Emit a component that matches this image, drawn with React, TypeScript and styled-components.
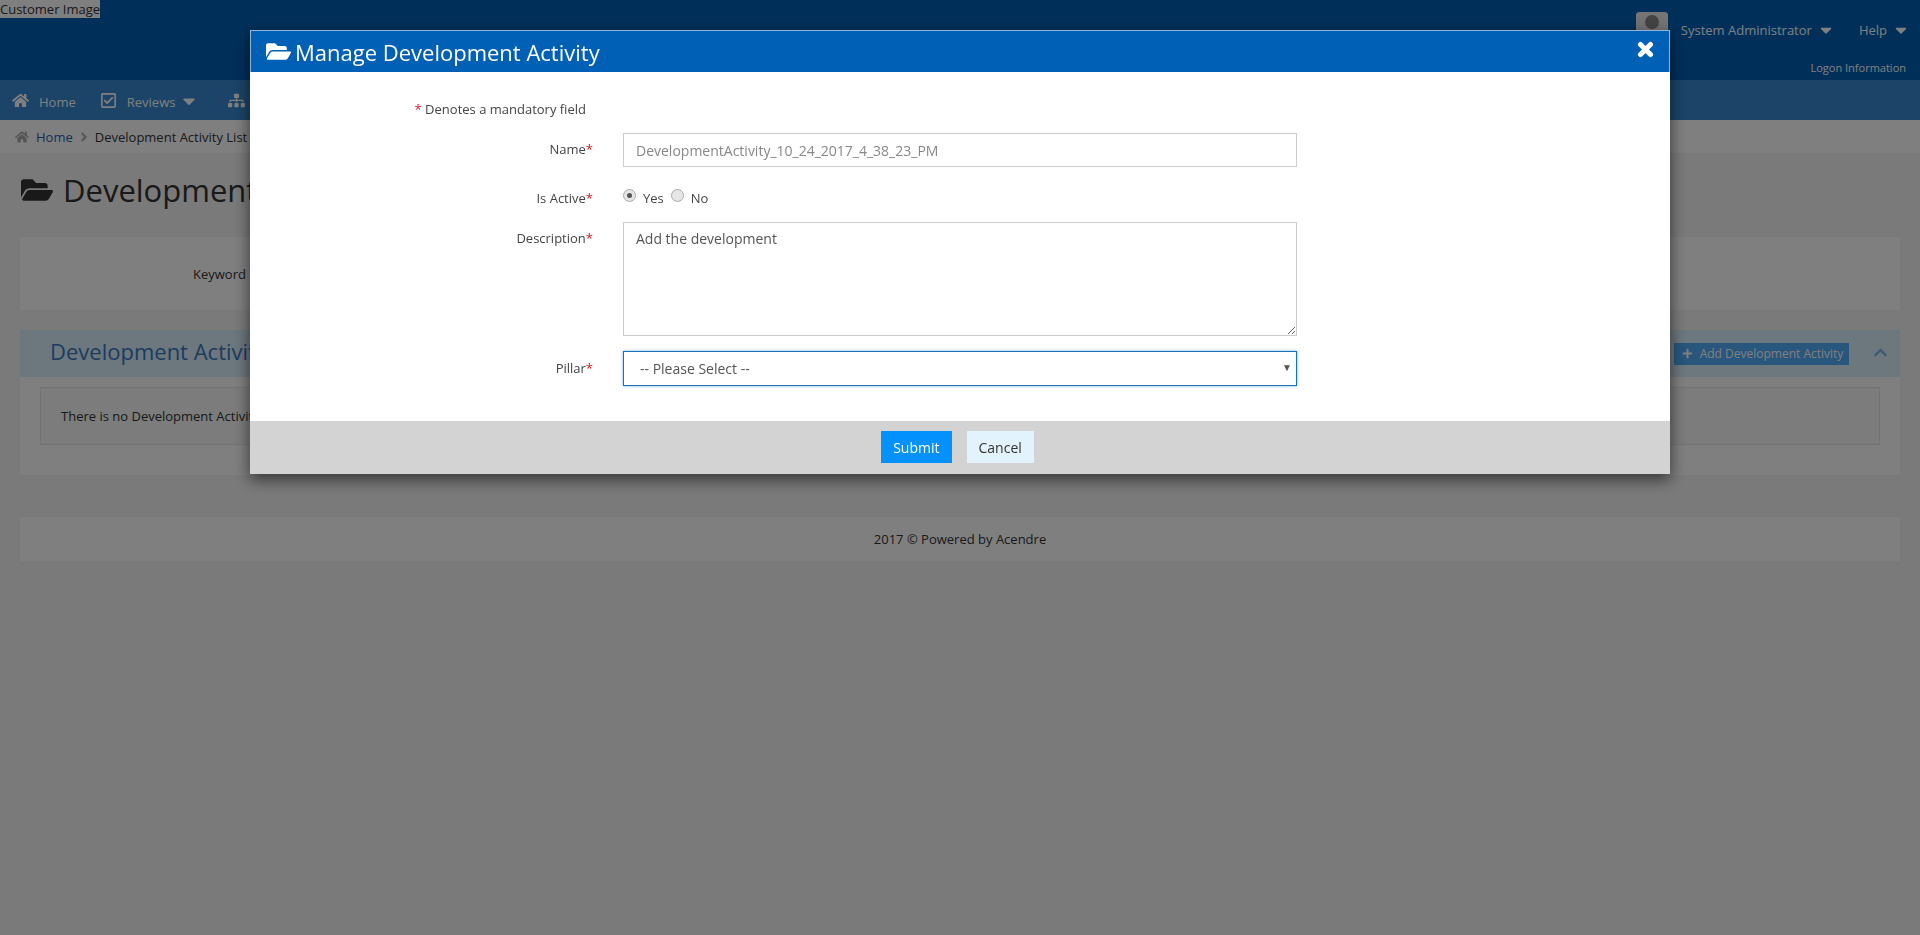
import React from 'react';
import styled, { createGlobalStyle } from 'styled-components';
import {
  FaCaretDown,
  FaChevronUp,
  FaFolderOpen,
  FaHome,
  FaPlus,
  FaRegCheckSquare,
  FaSitemap,
  FaAngleRight,
} from 'react-icons/fa';

const GlobalStyle = createGlobalStyle`
  html, body {
    margin: 0;
    padding: 0;
    min-height: 100%;
    background: #f4f4f4;
    font-family: "Open Sans", "Liberation Sans", sans-serif;
    font-size: 13px;
    color: #333;
    overflow: hidden;
  }
  * { box-sizing: border-box; }
`;

const Page = styled.div`
  height: 935px;
  display: flex;
  flex-direction: column;
`;

const TopBar = styled.header`
  height: 80px;
  background: #0060b5;
  display: flex;
  justify-content: space-between;
`;

const CustomerImage = styled.span`
  align-self: flex-start;
  background: #fff;
  color: #333;
  font-size: 13px;
  line-height: 18px;
  height: 18px;
`;

const UserArea = styled.div`
  padding: 12px 14px 0 0;
  display: flex;
  flex-direction: column;
  align-items: flex-end;
  color: #fff;
`;

const UserRow = styled.div`
  display: flex;
  align-items: flex-start;
  font-size: 13px;
  line-height: 36px;
  height: 47px;
  white-space: nowrap;
`;

const Avatar = styled.div`
  width: 32px;
  height: 32px;
  border-radius: 4px;
  background: #fff;
  margin-right: 13px;
  overflow: hidden;
  svg { display: block; }
`;

const UserLink = styled.span<{ $gap?: number }>`
  display: inline-flex;
  align-items: center;
  gap: 8px;
  margin-left: ${(p) => p.$gap ?? 0}px;
  svg { font-size: 18px; margin: 0 -4px 0 -3px; }
`;

const LogonLink = styled.a`
  font-size: 11px;
  line-height: 18px;
  color: #fff;
`;

const NavBar = styled.nav`
  height: 40px;
  background: #3688d0;
  display: flex;
  align-items: center;
  padding: 3px 0 0 12px;
  color: #fff;
  font-size: 13px;
`;

const NavItem = styled.span`
  display: inline-flex;
  align-items: center;
  gap: 10px;
  margin-right: 24px;
  svg { font-size: 17px; margin-top: -3px; }
  svg.caret { font-size: 20px; margin: -2px 5px 0 -6px; }
`;

const Breadcrumb = styled.div`
  height: 33px;
  background: #fff;
  display: flex;
  align-items: center;
  padding-left: 15px;
  font-size: 13px;
  color: #333;
  gap: 8px;
`;

const CrumbIcon = styled.span`
  display: inline-flex;
  color: #aaa;
  font-size: 14px;
  margin-right: -1px;
`;

const CrumbArrow = styled(CrumbIcon)`
  margin: 0 -4px;
`;

const CrumbLink = styled.a`
  color: #2a5db0;
`;

const PageTitle = styled.h1`
  margin: 0;
  padding: 0 21px 10px;
  height: 84px;
  display: flex;
  align-items: center;
  gap: 10px;
  font-size: 31px;
  font-weight: 400;
  color: #333;
  svg { font-size: 32px; }
`;

const Card = styled.section`
  margin: 0 20px;
  background: #fff;
`;

const SearchCard = styled(Card)`
  height: 73px;
  padding: 27px 0 0 173px;
  font-size: 13px;
  line-height: 20px;
`;

const ListPanel = styled(Card)`
  margin-top: 20px;
  height: 145px;
`;

const PanelHead = styled.div`
  height: 47px;
  background: #d9eefd;
  display: flex;
  align-items: center;
  justify-content: space-between;
  padding: 0 12px 0 30px;
`;

const PanelTitle = styled.h2`
  margin: 0 0 5px;
  font-size: 22px;
  font-weight: 400;
  color: #3b78c0;
`;

const PanelActions = styled.div`
  display: flex;
  align-items: center;
  gap: 24px;
`;

const AddButton = styled.button`
  height: 22px;
  width: 175px;
  border: 0;
  padding: 0 0 0 2px;
  background: #50acf8;
  color: #fff;
  font: 12px "Open Sans", sans-serif;
  display: inline-flex;
  align-items: center;
  justify-content: center;
  gap: 7px;
  svg { font-size: 11px; }
`;

const Collapse = styled.span`
  display: inline-flex;
  color: #7fb4e6;
  font-size: 15px;
  margin-bottom: 3px;
`;

const EmptyNote = styled.div`
  margin: 10px 20px 0;
  height: 58px;
  display: flex;
  align-items: center;
  padding-left: 20px;
  background: #f8f8f8;
  border: 1px solid #e7e7e7;
  font-size: 13px;
`;

const Footer = styled(Card)`
  margin-top: 42px;
  height: 44px;
  display: flex;
  align-items: center;
  justify-content: center;
  font-size: 13px;
`;

const Overlay = styled.div`
  position: fixed;
  inset: 0;
  background: rgba(0, 0, 0, 0.5);
  display: flex;
  justify-content: center;
  align-items: flex-start;
  padding-top: 30px;
`;

const Modal = styled.div`
  width: 1420px;
  background: #fff;
  box-shadow: 0 5px 15px rgba(0, 0, 0, 0.6);
`;

const ModalHead = styled.div`
  height: 42px;
  background: #0060b5;
  border: 1px solid #8fb3d6;
  border-bottom: 0;
  color: #fff;
  display: flex;
  align-items: center;
  justify-content: space-between;
  padding: 0 15px;
`;

const ModalTitle = styled.h3`
  margin: 0;
  display: flex;
  align-items: center;
  gap: 4px;
  font-size: 22px;
  font-weight: 400;
  svg { font-size: 25px; }
`;

const CloseIcon = styled.span`
  display: inline-flex;
  margin: -4px 0 0 0;
`;

const FormBody = styled.div`
  height: 349px;
  padding-top: 27px;
  display: grid;
  grid-template-columns: 343px 674px;
  column-gap: 30px;
  grid-auto-rows: min-content;
  align-content: start;
`;

const Required = styled.span`
  color: #e0141e;
`;

const LegendNote = styled.div`
  grid-column: 1 / span 2;
  width: 336px;
  text-align: right;
  font-size: 13px;
  line-height: 20px;
  height: 34px;
  color: #444;
`;

const FieldLabel = styled.label<{ $top?: number }>`
  text-align: right;
  font-size: 13px;
  line-height: 20px;
  color: #444;
  padding-top: ${(p) => p.$top ?? 0}px;
`;

const FieldCell = styled.div<{ $bottom: number }>`
  margin-bottom: ${(p) => p.$bottom}px;
  position: relative;
`;

const TextInput = styled.input`
  display: block;
  width: 100%;
  height: 34px;
  border: 1px solid #ccc;
  padding: 0 12px;
  font: 14px "Open Sans", sans-serif;
  color: #888;
  outline: none;
`;

const RadioRow = styled.div`
  display: flex;
  align-items: center;
  height: 22px;
  font-size: 13px;
  color: #444;
`;

const Radio = styled.input.attrs({ type: 'radio' })`
  appearance: none;
  width: 13px;
  height: 13px;
  margin: -6px 7px 0 0;
  border-radius: 50%;
  border: 1px solid #aaa;
  background: #e6e6e6;
  display: inline-grid;
  place-items: center;
  &:checked::before {
    content: '';
    width: 5px;
    height: 5px;
    border-radius: 50%;
    background: #555;
  }
`;

const RadioText = styled.span`
  margin-right: 7px;
`;

const TextArea = styled.textarea`
  display: block;
  width: 100%;
  height: 114px;
  border: 1px solid #ccc;
  padding: 6px 12px;
  font: 14px/20px "Open Sans", sans-serif;
  color: #555;
  outline: none;
`;

const SelectBox = styled.select`
  display: block;
  width: 100%;
  height: 35px;
  appearance: none;
  background: #fff;
  border: 1px solid #1a6fb5;
  box-shadow: 0 0 3px rgba(60, 150, 240, 0.7);
  border-radius: 0;
  padding: 0 16px;
  font: 14px "Open Sans", sans-serif;
  color: #555;
  outline: none;
`;

const SelectArrow = styled.span`
  position: absolute;
  right: 5px;
  top: 10px;
  font-size: 10px;
  line-height: 12px;
  color: #555;
  pointer-events: none;
`;

const ModalFoot = styled.div`
  height: 53px;
  background: #d3d3d3;
  display: flex;
  justify-content: center;
  align-items: flex-start;
  padding: 10px 5px 0 0;
  gap: 15px;
`;

const FootButton = styled.button<{ $primary?: boolean }>`
  height: 32px;
  padding: 0 12px;
  border: 0;
  background: ${(p) => (p.$primary ? '#0391fd' : '#e3f3fd')};
  color: ${(p) => (p.$primary ? '#fff' : '#333')};
  font: 14px "Open Sans", sans-serif;
`;

function ProfileIcon() {
  return (
    <svg width="32" height="32" viewBox="0 0 32 32">
      <rect width="32" height="32" fill="#e8e8e8" />
      <circle cx="16" cy="10" r="7" fill="#888" />
      <path d="M3 32c0-8 6-13 13-13s13 5 13 13z" fill="#888" />
    </svg>
  );
}

function CloseGlyph() {
  return (
    <svg width="17" height="17" viewBox="0 0 17 17">
      <path d="M3.5 3.5l10 10M13.5 3.5l-10 10" stroke="#fff" strokeWidth="5" strokeLinecap="round" fill="none" />
    </svg>
  );
}

export default function App() {
  return (
    <>
      <GlobalStyle />
      <Page>
        <TopBar>
          <CustomerImage>Customer Image</CustomerImage>
          <UserArea>
            <UserRow>
              <Avatar>
                <ProfileIcon />
              </Avatar>
              <UserLink>
                System Administrator <FaCaretDown />
              </UserLink>
              <UserLink $gap={28}>
                Help <FaCaretDown />
              </UserLink>
            </UserRow>
            <LogonLink>Logon Information</LogonLink>
          </UserArea>
        </TopBar>
        <NavBar>
          <NavItem>
            <FaHome /> Home
          </NavItem>
          <NavItem>
            <FaRegCheckSquare /> Reviews <FaCaretDown className="caret" />
          </NavItem>
          <NavItem>
            <FaSitemap />
          </NavItem>
        </NavBar>
        <Breadcrumb>
          <CrumbIcon>
            <FaHome />
          </CrumbIcon>
          <CrumbLink>Home</CrumbLink>
          <CrumbArrow>
            <FaAngleRight />
          </CrumbArrow>
          Development Activity List
        </Breadcrumb>
        <PageTitle>
          <FaFolderOpen /> Development Activity
        </PageTitle>
        <SearchCard>Keyword</SearchCard>
        <ListPanel>
          <PanelHead>
            <PanelTitle>Development Activity List</PanelTitle>
            <PanelActions>
              <AddButton>
                <FaPlus /> Add Development Activity
              </AddButton>
              <Collapse>
                <FaChevronUp />
              </Collapse>
            </PanelActions>
          </PanelHead>
          <EmptyNote>There is no Development Activity</EmptyNote>
        </ListPanel>
        <Footer>2017 © Powered by Acendre</Footer>
      </Page>
      <Overlay>
        <Modal>
          <ModalHead>
            <ModalTitle>
              <FaFolderOpen /> Manage Development Activity
            </ModalTitle>
            <CloseIcon>
              <CloseGlyph />
            </CloseIcon>
          </ModalHead>
          <FormBody>
            <LegendNote>
              <Required>*</Required> Denotes a mandatory field
            </LegendNote>
            <FieldLabel $top={6}>
              Name<Required>*</Required>
            </FieldLabel>
            <FieldCell $bottom={20}>
              <TextInput readOnly value="DevelopmentActivity_10_24_2017_4_38_23_PM" />
            </FieldCell>
            <FieldLabel $top={1}>
              Is Active<Required>*</Required>
            </FieldLabel>
            <FieldCell $bottom={13}>
              <RadioRow>
                <Radio name="active" defaultChecked />
                <RadioText>Yes</RadioText>
                <Radio name="active" />
                <RadioText>No</RadioText>
              </RadioRow>
            </FieldCell>
            <FieldLabel $top={6}>
              Description<Required>*</Required>
            </FieldLabel>
            <FieldCell $bottom={15}>
              <TextArea readOnly value="Add the development" />
            </FieldCell>
            <FieldLabel $top={7}>
              Pillar<Required>*</Required>
            </FieldLabel>
            <FieldCell $bottom={0}>
              <SelectBox defaultValue="">
                <option value="">-- Please Select --</option>
              </SelectBox>
              <SelectArrow>▼</SelectArrow>
            </FieldCell>
          </FormBody>
          <ModalFoot>
            <FootButton $primary>Submit</FootButton>
            <FootButton>Cancel</FootButton>
          </ModalFoot>
        </Modal>
      </Overlay>
    </>
  );
}
